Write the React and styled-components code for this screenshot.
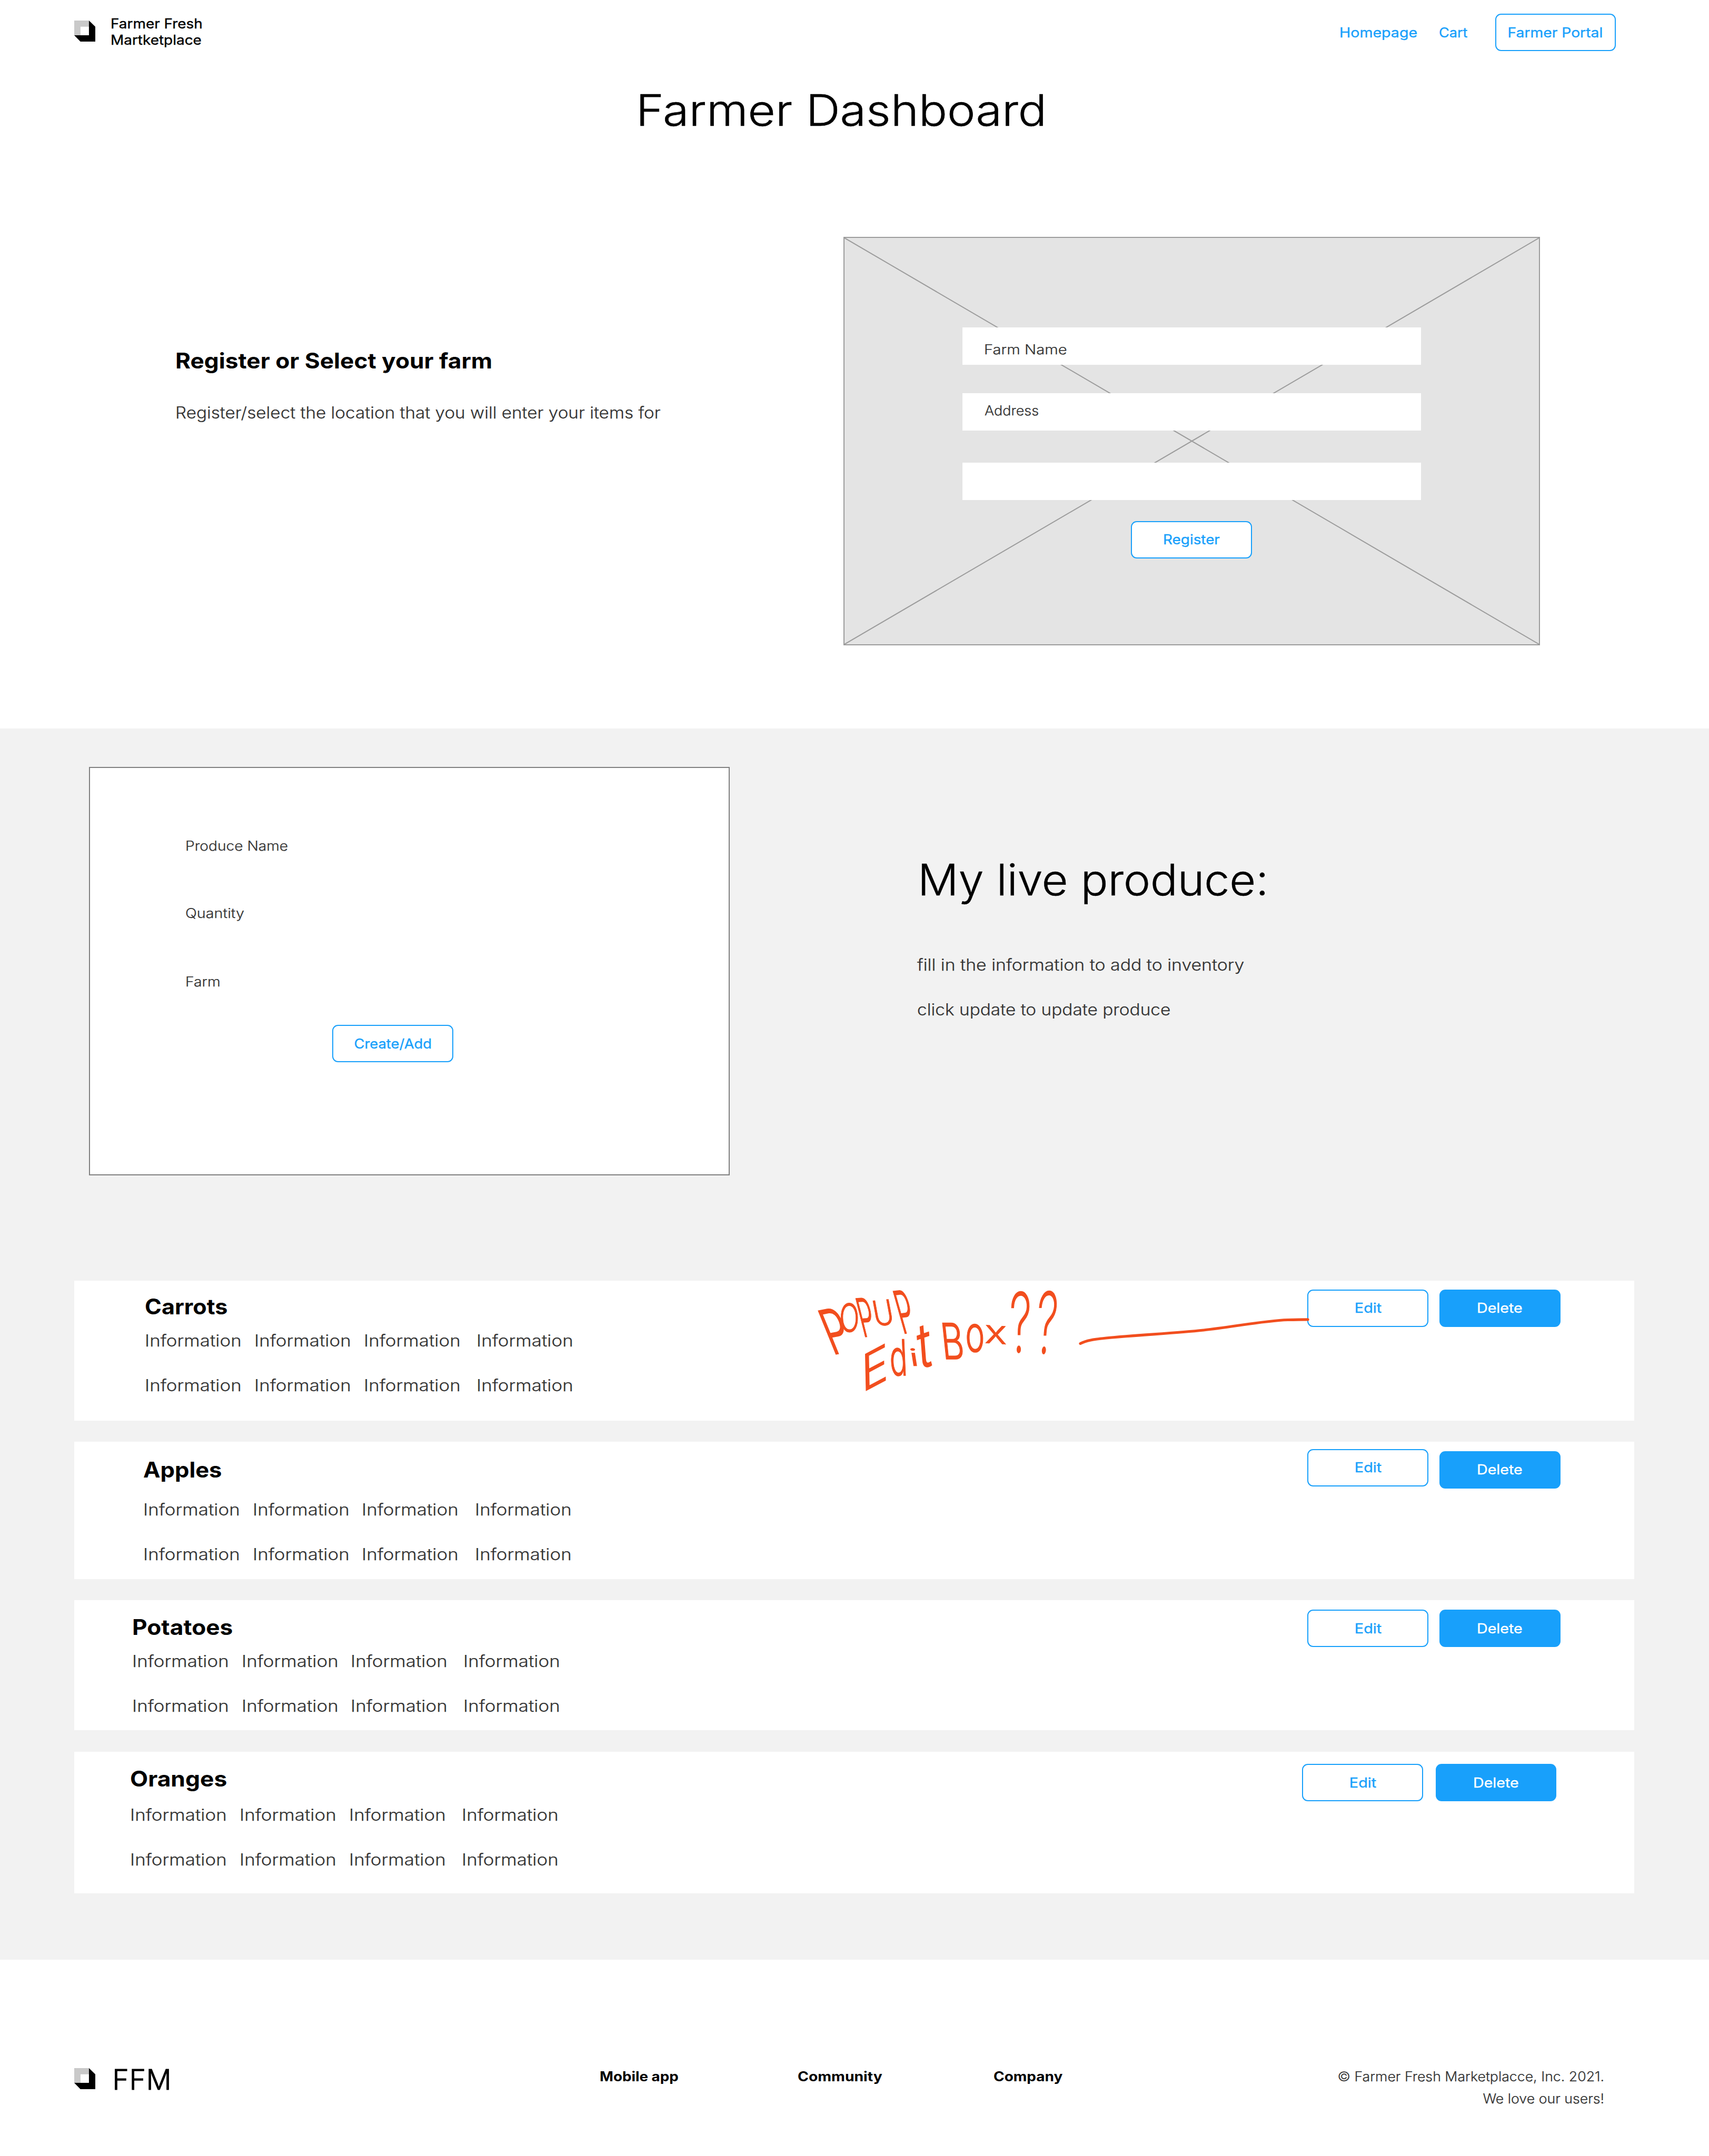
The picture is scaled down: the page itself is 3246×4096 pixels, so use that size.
import React from 'react';
import styled, { createGlobalStyle } from 'styled-components';

const BLUE = '#18a0fb';
const INK = '#333333';
const MARKER = '#f24e1e';

const GlobalStyle = createGlobalStyle`
  *, *::before, *::after { box-sizing: border-box; }
  body {
    margin: 0;
    background: #ffffff;
    color: #000000;
    font-family: Inter, 'Open Sans', 'Liberation Sans', sans-serif;
    font-kerning: normal;
  }
  h1, h2, h3, p, ul { margin: 0; padding: 0; }
  ul { list-style: none; }
  a { color: inherit; text-decoration: none; }
`;

const Page = styled.div`
  width: 3246px;
  height: 4096px;
  display: flex;
  flex-direction: column;
  overflow: hidden;
`;

/* ---------- shared parts ---------- */

/* Widens the letterforms without affecting the surrounding flow. */
const Wide = styled.span`
  display: inline-block;
  transform: scaleX(${p => p.$by});
  transform-origin: ${p => p.$from ?? 'left'} center;
  white-space: nowrap;
`;

const Button = styled.button`
  flex: none;
  width: 229.5px;
  height: 71px;
  padding: 0;
  margin: ${p => p.$margin ?? '0'};
  display: flex;
  align-items: center;
  justify-content: center;
  border: 2.5px solid ${BLUE};
  border-radius: 11px;
  background: ${p => (p.$solid ? BLUE : '#ffffff')};
  color: ${p => (p.$solid ? '#ffffff' : BLUE)};
  font: 400 25.3px / 40px Inter, sans-serif;
  -webkit-text-stroke: 0.35px currentColor;
`;

const Display = styled.h1`
  font-size: 82px;
  font-weight: 300;
  line-height: 100px;
  margin: ${p => p.$margin ?? '0'};
  -webkit-text-stroke: 0.6px currentColor;
`;

const Heading = styled.h2`
  font-size: 40.7px;
  font-weight: 700;
  line-height: ${p => p.$leading ?? 50}px;
`;

const Body = styled.p`
  color: ${INK};
  font-size: 30.5px;
  font-weight: 300;
  line-height: ${p => p.$leading ?? 84.8}px;
  margin: ${p => p.$margin ?? '0'};
  -webkit-text-stroke: 0.25px currentColor;
`;

const Mark = styled.svg`
  flex: none;
  display: block;
  width: 40px;
  height: 40px;
  margin-top: ${p => p.$top}px;
`;

function LogoMark({ top }) {
  return (
    <Mark $top={top} viewBox="0 0 63 63" aria-hidden="true">
      <path d="M0 0H44V18.5H18.7V44H0Z" fill="#c9c9c9" />
      <path d="M44 0L63 18.5V63H18.5L0 44H44Z" fill="#000" />
    </Mark>
  );
}

/* ---------- header ---------- */

const Header = styled.header`
  flex: none;
  height: 125px;
  padding: 0 177px 0 141px;
  display: flex;
  align-items: flex-start;
`;

const Brand = styled.div`
  margin: 29.6px 0 0 29.4px;
  font-size: 25px;
  line-height: 31.75px;
  -webkit-text-stroke: 0.35px currentColor;
`;

const Nav = styled.nav`
  margin: 26.2px 0 0 auto;
  display: flex;
  align-items: center;
  color: ${BLUE};
  font-size: 25.3px;
  -webkit-text-stroke: 0.35px currentColor;
`;

const NavLink = styled.a`
  width: ${p => p.$width}px;
`;

const TitleBar = styled.div`
  flex: none;
  padding: 35.2px 0 0 1208px;
`;

/* ---------- farm registration ---------- */

const Hero = styled.section`
  flex: none;
  height: 1123.8px;
  padding-top: 189.5px;
  display: flex;
  align-items: flex-start;
`;

const HeroCopy = styled.div`
  width: 1601.5px;
  padding: 210.9px 0 0 332.5px;
`;

const RegisterForm = styled.form`
  position: relative;
  width: 1323.3px;
  height: 776px;
  padding-top: 170.7px;
  border: 2px solid #9c9c9c;
  background: #e4e4e4;
  display: flex;
  flex-direction: column;
  align-items: center;
`;

const Cross = styled.svg`
  position: absolute;
  inset: 0;
  width: 100%;
  height: 100%;
`;

const Field = styled.label`
  position: relative;
  width: 871.3px;
  height: 71px;
  margin-bottom: ${p => p.$after}px;
  padding: ${p => p.$nudge ?? '0'};
  padding-left: ${p => p.$indent ?? 41.5}px;
  display: flex;
  align-items: center;
  background: #ffffff;
  color: ${INK};
  font-size: 25.3px;
  font-weight: 300;
  -webkit-text-stroke: 0.25px currentColor;
`;

const FormAction = styled.div`
  position: relative;
`;

/* ---------- inventory ---------- */

const Inventory = styled.section`
  flex: none;
  height: 2339.5px;
  padding-top: 72.9px;
  background: #f2f2f2;
`;

const InventoryTop = styled.div`
  display: flex;
  padding-left: 168.7px;
  gap: 355.2px;
`;

const ProducePanel = styled.form`
  width: 1217.7px;
  height: 776px;
  padding: 128.5px 0 0 181.5px;
  border: 2.3px solid #808080;
  background: #ffffff;
`;

const PanelLabel = styled.label`
  display: block;
  color: ${INK};
  font-size: 25.3px;
  font-weight: 300;
  line-height: 40px;
  margin-bottom: ${p => p.$after}px;
  -webkit-text-stroke: 0.25px currentColor;
`;

const ProduceCopy = styled.div`
  padding-top: 165.2px;
`;

const List = styled.ul`
  margin: 199.7px 0 0 141.3px;
  width: 2962.9px;
`;

const Row = styled.li`
  position: relative;
  height: ${p => p.$height}px;
  margin-bottom: ${p => p.$after}px;
  padding: 0 ${p => p.$right}px 0 ${p => p.$left}px;
  display: flex;
  justify-content: space-between;
  align-items: flex-start;
  background: #ffffff;
`;

const RowText = styled.div`
  padding-top: ${p => p.$top}px;
`;

const Facts = styled.div`
  margin-top: ${p => p.$top}px;
  display: grid;
  grid-template-columns: 208px 207.3px 214.5px 200px;
`;

const Actions = styled.div`
  display: flex;
  align-items: flex-start;
  gap: ${p => p.$gap}px;
`;

/* ---------- marker annotation ---------- */

const Note = styled.div`
  position: absolute;
  left: 1370px;
  top: -6.9px;
  width: 980px;
  height: 254px;
  color: ${MARKER};
  pointer-events: none;
`;

const Connector = styled.svg`
  position: absolute;
  left: 0;
  top: 0;
  width: 980px;
  height: 254px;
  overflow: visible;
`;

/* Each letter sits at a baseline point and is slanted and squeezed on its own. */
const Letter = styled.span`
  position: absolute;
  left: 0;
  top: -86.4px;
  font-size: 100px;
  font-weight: ${p => p.$weight ?? 300};
  line-height: 100px;
  -webkit-text-stroke: 1.6px currentColor;
  transform-origin: 0 86.4px;
  transform: matrix(${p => p.$m.join(',')});
`;

const WORDS = [
  [
    ['P', [0.72, -0.14, 0.46, 1.13, 70, 149]],
    ['O', [0.5, -0.02, 0.02, 0.74, 84, 106]],
    ['P', [0.46, -0.03, 0.25, 1.0, 128, 115]],
    ['U', [0.53, -0.05, 0.12, 0.65, 151, 94]],
    ['P', [0.48, -0.06, 0.31, 1.1, 203, 109]],
  ],
  [
    ['E', [0.85, -0.45, 0.02, 0.95, 126, 221]],
    ['d', [0.56, 0, 0.04, 0.94, 180, 188]],
    ['i', [0.8, 0, 0.07, 0.45, 218, 170]],
    ['t', [0.85, -0.3, 0.09, 1.16, 235, 177]],
  ],
  [
    ['B', [0.66, 0, 0.1, 0.94, 280, 157]],
    ['o', [0.62, 0, 0.02, 0.95, 323, 143]],
    ['x', [0.8, 0.05, 0, 0.62, 359, 126]],
  ],
  [
    ['?', [0.85, 0, -0.03, 1.56, 405, 144], 200],
    ['?', [0.82, 0, -0.12, 1.6, 453, 146], 200],
  ],
];

function Annotation() {
  return (
    <Note>
      {WORDS.map((word, i) => (
        <span key={i}>
          {word.map(([char, m, weight], j) => (
            <Letter key={j} $m={m} $weight={weight}>{char}</Letter>
          ))}
        </span>
      ))}
      <Connector viewBox="0 0 980 254" fill="none" aria-hidden="true">
        <path
          d="M541 126.500C552 120.500 566 118.500 590 116C650 110 720 107 775 101C830 95 890 83 935 81.500C950 81 960 80.800 973 80.800"
          stroke={MARKER}
          strokeWidth="5.200"
          strokeLinecap="round"
        />
      </Connector>
    </Note>
  );
}

/* ---------- footer ---------- */

const Footer = styled.footer`
  flex: none;
  padding: 197.3px 199.3px 0 141px;
  display: flex;
  align-items: flex-start;
`;

const Monogram = styled.div`
  width: 958.4px;
  padding-left: 32.5px;
  font-size: 53px;
  font-weight: 300;
  line-height: 60px;
  letter-spacing: 1px;
  -webkit-text-stroke: 1px currentColor;
`;

const FooterLink = styled.a`
  width: ${p => p.$width}px;
  padding-top: 3.4px;
  font-size: 25.3px;
  font-weight: 700;
  line-height: 42.3px;
`;

const Legal = styled.div`
  margin-left: auto;
  padding-top: 3.4px;
  color: ${INK};
  font-size: 25.3px;
  font-weight: 300;
  line-height: 42.3px;
  text-align: right;
  -webkit-text-stroke: 0.25px currentColor;
`;

const PRODUCE = [
  { name: 'Carrots', wide: 1.06, height: 266.2, after: 40.5, left: 134.2, right: 140.7, top: 29.2, factsTop: 0, edit: 17.2, del: 17.2, gap: 21.1, note: true },
  { name: 'Apples', wide: 1.07, height: 261.2, after: 39.7, left: 130.9, right: 140.7, top: 32.9, factsTop: 10.7, edit: 13.7, del: 17.3, gap: 21.1 },
  { name: 'Potatoes', wide: 1.086, height: 247, after: 40.5, left: 109.4, right: 140.7, top: 30.5, factsTop: 0, edit: 18.3, del: 18.3, gap: 21.1 },
  { name: 'Oranges', wide: 1.09, height: 269, after: 0, left: 106, right: 148, top: 31.5, factsTop: 3.4, edit: 23.5, del: 23.5, gap: 23.8 },
];

export default function App() {
  return (
    <Page>
      <GlobalStyle />
      <Header>
        <LogoMark top={38.6} />
        <Brand>
          <Wide $by={1.117}>
            Farmer Fresh
            <br />
            Martketplace
          </Wide>
        </Brand>
        <Nav>
          <NavLink href="#" $width={188.7}><Wide $by={1.13}>Homepage</Wide></NavLink>
          <NavLink href="#" $width={107}><Wide $by={1.07}>Cart</Wide></NavLink>
          <Button><Wide $by={1.117} $from="center">Farmer Portal</Wide></Button>
        </Nav>
      </Header>

      <TitleBar>
        <Display><Wide $by={1.1}>Farmer Dashboard</Wide></Display>
      </TitleBar>

      <Hero>
        <HeroCopy>
          <Heading><Wide $by={1.087}>Register or Select your farm</Wide></Heading>
          <Body $leading={42} $margin="52.8px 0 0">
            <Wide $by={1.09}>Register/select the location that you will enter your items for</Wide>
          </Body>
        </HeroCopy>
        <RegisterForm>
          <Cross viewBox="0 0 1319 772" preserveAspectRatio="none" stroke="#9c9c9c" strokeWidth="2" aria-hidden="true">
            <path d="M0 0L1319 772M1319 0L0 772" />
          </Cross>
          <Field $after={53.3} $nudge="10.6px 0 0"><Wide $by={1.154}>Farm Name</Wide></Field>
          <Field $after={61.7} $nudge="0 0 5.2px" $indent={42}><Wide $by={1.065}>Address</Wide></Field>
          <Field $after={39.6} />
          <FormAction>
            <Button type="button"><Wide $by={1.1} $from="center">Register</Wide></Button>
          </FormAction>
        </RegisterForm>
      </Hero>

      <Inventory>
        <InventoryTop>
          <ProducePanel>
            <PanelLabel $after={87.4}><Wide $by={1.112}>Produce Name</Wide></PanelLabel>
            <PanelLabel $after={89.8}><Wide $by={1.138}>Quantity</Wide></PanelLabel>
            <PanelLabel $after={62.6}><Wide $by={1.12}>Farm</Wide></PanelLabel>
            <Button type="button" $margin="0 0 0 279px"><Wide $by={1.08} $from="center">Create/Add</Wide></Button>
          </ProducePanel>
          <ProduceCopy>
            <Display as="h2" $margin="0 0 69.2px 1px"><Wide $by={1.048}>My live produce:</Wide></Display>
            <Body><Wide $by={1.108}>fill in the information to add to inventory</Wide></Body>
            <Body><Wide $by={1.095}>click update to update produce</Wide></Body>
          </ProduceCopy>
        </InventoryTop>

        <List>
          {PRODUCE.map(item => (
            <Row key={item.name} $height={item.height} $after={item.after} $left={item.left} $right={item.right}>
              <RowText $top={item.top}>
                <Heading as="h3" $leading={42}><Wide $by={item.wide}>{item.name}</Wide></Heading>
                <Facts $top={item.factsTop}>
                  {Array.from({ length: 8 }, (_, i) => (
                    <Body key={i} $leading={85}><Wide $by={1.143}>Information</Wide></Body>
                  ))}
                </Facts>
              </RowText>
              <Actions $gap={item.gap}>
                <Button $margin={`${item.edit}px 0 0`}><Wide $by={1.14} $from="center">Edit</Wide></Button>
                <Button $solid $margin={`${item.del}px 0 0`}><Wide $by={1.13} $from="center">Delete</Wide></Button>
              </Actions>
              {item.note && <Annotation />}
            </Row>
          ))}
        </List>
      </Inventory>

      <Footer>
        <LogoMark top={8.7} />
        <Monogram>FFM</Monogram>
        <FooterLink href="#" $width={375.8}><Wide $by={1.098}>Mobile app</Wide></FooterLink>
        <FooterLink href="#" $width={371.8}><Wide $by={1.118}>Community</Wide></FooterLink>
        <FooterLink href="#" $width={200}><Wide $by={1.105}>Company</Wide></FooterLink>
        <Legal>
          <Wide $by={1.055} $from="right">
            © Farmer Fresh Marketplacce, Inc. 2021.
            <br />
            We love our users!
          </Wide>
        </Legal>
      </Footer>
    </Page>
  );
}
